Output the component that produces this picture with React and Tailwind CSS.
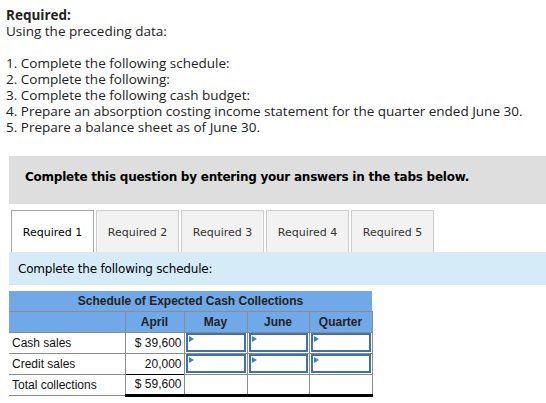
import React from "react";

const Tri = () => (
  <span className="absolute left-[1px] top-[1px] w-0 h-0 border-t-[3px] border-b-[3px] border-l-[5px] border-t-transparent border-b-transparent border-l-[#3b7fd0]" />
);

function InputCell() {
  return (
    <td className="p-0 border border-[#8c8c8c] h-[21px]">
      <div className="relative h-[19px] mx-[1px] border-2 border-[#3f6fb6] bg-white">
        <Tri />
      </div>
    </td>
  );
}

export default function App() {
  const tabs = ["Required 1", "Required 2", "Required 3", "Required 4", "Required 5"];
  return (
    <div className="w-[546px] h-[403px] bg-white overflow-hidden text-[#222]">
      <div className="h-[156px] pt-[7px] pl-[6px] text-[13.5px] leading-[16px] font-['Open_Sans',sans-serif]">
        <div className="font-bold">Required:</div>
        <div>Using the preceding data:</div>
        <div className="h-[16px]" />
        <div>1. Complete the following schedule:</div>
        <div>2. Complete the following:</div>
        <div>3. Complete the following cash budget:</div>
        <div>4. Prepare an absorption costing income statement for the quarter ended June 30.</div>
        <div>5. Prepare a balance sheet as of June 30.</div>
      </div>
      <div className="ml-[9px] h-[48px] bg-[#dedede] flex items-center pl-[16px] pb-[6px] text-[12px] tracking-[-0.24px] font-bold text-black font-['DejaVu_Sans',Verdana,sans-serif]">
        Complete this question by entering your answers in the tabs below.
      </div>
      <div className="mt-[6px] ml-[11px] flex gap-[2px] h-[42px]">
        {tabs.map((t, i) => (
          <div
            key={t}
            className={
              "w-[83px] flex items-center justify-center pt-[4px] border border-b-0 text-[11px] font-['DejaVu_Sans',Verdana,sans-serif] " +
              (i === 0 ? "bg-white border-[#a8a8a8] text-black" : "bg-[#f2f2f2] border-[#cccccc] text-[#333]")
            }
          >
            {t}
          </div>
        ))}
      </div>
      <div className="ml-[9px] h-[33px] bg-[#d6ebf8] flex items-center pl-[9px] text-[12px] tracking-[-0.2px] text-black font-['DejaVu_Sans',Verdana,sans-serif]">
        Complete the following schedule:
      </div>
      <table className="mt-[6px] ml-[9px] w-[363px] border-collapse table-fixed text-[12px] font-['Liberation_Sans',Arial,sans-serif] text-[#111]">
        <colgroup>
          <col className="w-[116px]" />
          <col className="w-[59px]" />
          <col className="w-[63px]" />
          <col className="w-[62px]" />
          <col className="w-[63px]" />
        </colgroup>
        <tbody>
          <tr className="h-[20px] bg-[#70a8e8]">
            <td colSpan={5} className="text-center font-bold p-0 text-[#222] border-b border-[#8c8c8c]">
              Schedule of Expected Cash Collections
            </td>
          </tr>
          <tr className="h-[21px] bg-[#70a8e8] font-bold text-[#222]">
            <td className="p-0 border-b border-[#8c8c8c]" />
            <td className="p-0 text-center border border-[#8c8c8c]">April</td>
            <td className="p-0 text-center border border-[#8c8c8c]">May</td>
            <td className="p-0 text-center border border-[#8c8c8c]">June</td>
            <td className="p-0 text-center border border-[#8c8c8c]">Quarter</td>
          </tr>
          <tr className="h-[21px]">
            <td className="p-0 pl-[3px] border-b border-[#8c8c8c]">Cash sales</td>
            <td className="p-0 pr-[2px] text-right border border-[#8c8c8c]">$ 39,600</td>
            <InputCell />
            <InputCell />
            <InputCell />
          </tr>
          <tr className="h-[21px]">
            <td className="p-0 pl-[3px] border-b border-[#8c8c8c]">Credit sales</td>
            <td className="p-0 pr-[2px] text-right border-x border-[#8c8c8c] border-b-black">20,000</td>
            <InputCell />
            <InputCell />
            <InputCell />
          </tr>
          <tr className="h-[21px]">
            <td className="p-0 pl-[3px] border-b border-[#8c8c8c]">Total collections</td>
            <td className="p-0 pr-[2px] text-right border-x border-x-[#8c8c8c] border-t border-t-black border-b-[3px] border-b-black">$ 59,600</td>
            <td className="p-0 border-x border-x-[#8c8c8c] border-t border-t-black border-b-[3px] border-b-black" />
            <td className="p-0 border-x border-x-[#8c8c8c] border-t border-t-black border-b-[3px] border-b-black" />
            <td className="p-0 border-x border-x-[#8c8c8c] border-t border-t-black border-b-[3px] border-b-black" />
          </tr>
        </tbody>
      </table>
    </div>
  );
}
